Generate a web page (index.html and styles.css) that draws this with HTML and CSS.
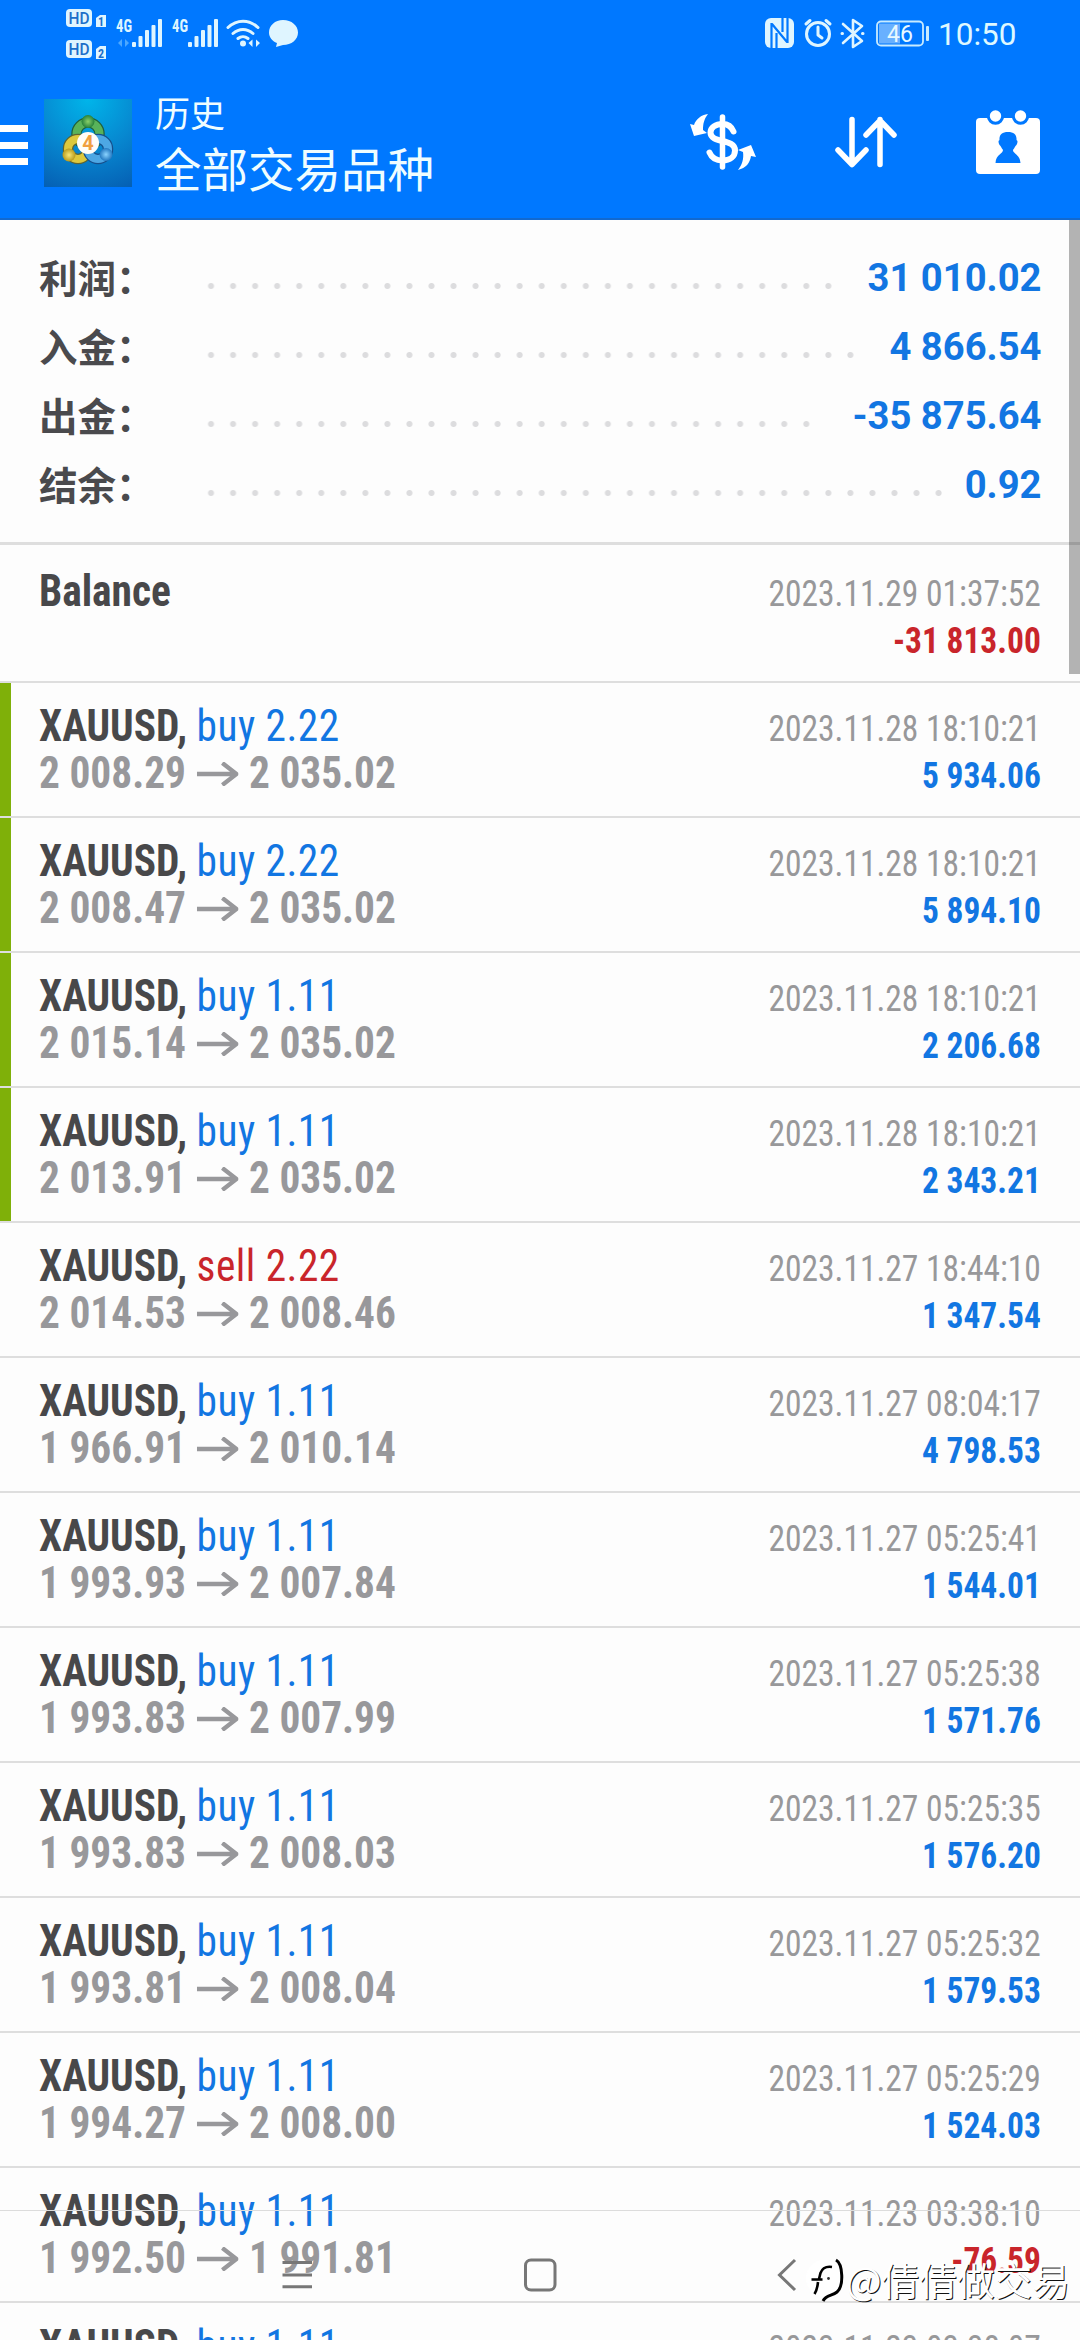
FILE: index.html
```html
<!DOCTYPE html>
<html lang="zh-CN">
<head>
<meta charset="utf-8">
<title>历史</title>
<link rel="stylesheet" href="styles.css">
</head>
<body>
<div class="screen">
  <header class="header">
    <div class="status">
      <svg class="status-left" width="240" height="66" viewBox="60 0 240 66">
        <g fill="#dff5ff">
          <rect x="66" y="9" width="26" height="18" rx="4"/>
          <path d="M96 18l4-3h6v12H96z"/>
          <rect x="66" y="40" width="26" height="18" rx="4"/>
          <path d="M96 49l4-3h6v13H96z"/>
          <rect x="132" y="42" width="4" height="5" rx="1"/>
          <rect x="138.500" y="36" width="4" height="11" rx="1"/>
          <rect x="145" y="30" width="4" height="17" rx="1"/>
          <rect x="151.500" y="25" width="4" height="22" rx="1"/>
          <rect x="158" y="19" width="4" height="28" rx="1"/>
          <rect x="188" y="42" width="4" height="5" rx="1"/>
          <rect x="194.500" y="36" width="4" height="11" rx="1"/>
          <rect x="201" y="30" width="4" height="17" rx="1"/>
          <rect x="207.500" y="25" width="4" height="22" rx="1"/>
          <rect x="214" y="19" width="4" height="28" rx="1"/>
          <circle cx="243" cy="43.500" r="3"/>
          <path d="M248.500 43l4-3.500v7.500zM260 43l-4-3.500v7.500z"/>
          <path d="M283 20c8.500 0 15 5.500 15 12.500S291.500 45 283 45l-7 2 1-4c-5-2-8-6-8-10.500C269 25.500 275 20 283 20z"/>
        </g>
        <g fill="none" stroke="#dff5ff" stroke-width="3" stroke-linecap="round">
          <path d="M228 27.500c9-8.500 21-8.500 30 0M233 33.500c6-5.500 14-5.500 20 0M238 38.500c3-2.500 7-2.500 10 0"/>
        </g>
        <path d="M118 43l4-4v8zM129 43l-4-4v8z" fill="#4da8ff"/>
        <text class="hd" x="79" y="23.800" text-anchor="middle" textLength="21" lengthAdjust="spacingAndGlyphs">HD</text>
        <text class="hd" x="79" y="54.800" text-anchor="middle" textLength="21" lengthAdjust="spacingAndGlyphs">HD</text>
        <text class="sim" x="101" y="26" text-anchor="middle">1</text>
        <text class="sim" x="101" y="57.500" text-anchor="middle">2</text>
        <text class="net" x="116" y="32" textLength="16" lengthAdjust="spacingAndGlyphs">4G</text>
        <text class="net" x="172" y="32" textLength="16" lengthAdjust="spacingAndGlyphs">4G</text>
      </svg>
      <div class="status-right">
        <svg width="170" height="66" viewBox="760 0 170 66">
          <rect x="765" y="18" width="29" height="30" rx="6" fill="#dff5ff"/>
          <path d="M771.500 48V23M772 24l15 18M787.500 18v25M776.500 48V33M782.500 18v14" fill="none" stroke="#0078ff" stroke-width="2.200"/>
          <g fill="none" stroke="#dff5ff" stroke-width="3" stroke-linecap="round" stroke-linejoin="round">
            <circle cx="818" cy="34" r="11.500"/>
            <path d="M818 27v8l4 3M806 24l4-3.500M830 24l-4-3.500"/>
            <path d="M843 24l19 17-9 6V20l9 6-19 17" stroke-width="2.600"/>
            <path d="M842 33.500h.5M862.500 33.500h.5" stroke-width="3"/>
          </g>
          <rect x="879" y="23.500" width="21" height="20" fill="#68b0ff"/>
          <rect x="877" y="21.500" width="46" height="24" rx="4" fill="none" stroke="#c8ebff" stroke-width="1.800"/>
          <rect x="926" y="26" width="3" height="15" rx="1" fill="#c8ebff"/>
          <text class="battery" x="900" y="41.500" text-anchor="middle">46</text>
        </svg>
        <span class="clock">10:50</span>
      </div>
    </div>
    <div class="toolbar">
      <span class="menu"><i></i><i></i><i></i></span>
      <svg class="logo" width="88" height="88" viewBox="0 0 88 88">
        <defs>
          <radialGradient id="bg" cx=".5" cy="0" r="1.100"><stop offset="0" stop-color="#00b5ea"/><stop offset=".55" stop-color="#0786cf"/><stop offset="1" stop-color="#0560b4"/></radialGradient>
          <radialGradient id="gr"><stop offset="0" stop-color="#8ad06a"/><stop offset="1" stop-color="#26813a"/></radialGradient>
          <radialGradient id="ye"><stop offset="0" stop-color="#f8e878"/><stop offset="1" stop-color="#b89a1c"/></radialGradient>
          <radialGradient id="bl"><stop offset="0" stop-color="#8ad3ff"/><stop offset="1" stop-color="#2277c0"/></radialGradient>
        </defs>
        <rect width="88" height="88" fill="url(#bg)"/>
        <g fill="none">
          <circle cx="44" cy="35" r="11.500" stroke="#205f3c" stroke-width="10.500"/>
          <circle cx="44" cy="35" r="11.500" stroke="#59b25a" stroke-width="8"/>
          <circle cx="34" cy="50" r="10" stroke="#5f6430" stroke-width="10.500"/>
          <circle cx="34" cy="50" r="10" stroke="#ddc83c" stroke-width="8"/>
          <circle cx="54" cy="50" r="10" stroke="#164f8c" stroke-width="10.500"/>
          <circle cx="54" cy="50" r="10" stroke="#4da7e4" stroke-width="8"/>
        </g>
        <circle cx="44" cy="22.500" r="6.500" fill="url(#gr)"/>
        <circle cx="25" cy="56" r="6.500" fill="url(#ye)"/>
        <circle cx="62" cy="55.500" r="6.500" fill="url(#bl)"/>
        <circle cx="44" cy="44" r="11" fill="#fffdf8"/>
        <text class="logo-num" x="44" y="51" text-anchor="middle">4</text>
      </svg>
      <div class="titles">
        <div class="title">历史</div>
        <div class="subtitle">全部交易品种</div>
      </div>
      <div class="actions">
        <svg width="68" height="66" viewBox="688 110 68 66">
          <g fill="none" stroke="#fff" stroke-linecap="round">
            <path d="M721.500 118v50" stroke-width="5.500"/>
            <path d="M732.500 132.500c-2-5-6-7.500-11-7.500-7 0-12 3.500-12 8.500 0 11.500 24.500 5.500 24.500 18 0 6-5 10-12.500 10-6.500 0-11-3-13-8" stroke-width="6"/>
          </g>
          <path d="M707 115c-7 1-12 5-14 11l-4-1 4 12 13-3-4-3c0-6 1-11 5-16zM737 171c8-2 12-7 13-14l5 1-5-12-13 5 5 2c1 7-1 13-5 18z" fill="#fff"/>
        </svg>
        <svg width="64" height="66" viewBox="833 110 64 66">
          <path d="M851 120.500v45M837 151l14 14.500 14-14.500M879 165.500v-45M865 136l14-14.500 14 14.500" fill="none" stroke="#fff" stroke-width="5.500" stroke-linecap="round" stroke-linejoin="round"/>
        </svg>
        <svg width="66" height="66" viewBox="974 109 66 66">
          <rect x="975" y="118" width="64" height="56" rx="4" fill="#fff"/>
          <g fill="#fff" stroke="#0078ff" stroke-width="3">
            <circle cx="994.500" cy="116" r="7.200"/><circle cx="1019.500" cy="116" r="7.200"/>
          </g>
          <path d="M1007 132c6 0 9 3 8.500 8l1 1c0 3-1 4-2 5-1 2-2 3-2.500 4 0 4 7 4 7.500 13h-25c.5-9 7.500-9 7.500-13-.5-1-1.500-2-2.500-4-1-1-2-2-2-5l1-1c-.5-5 2.500-8 8.500-8z" fill="#0078ff"/>
        </svg>
      </div>
    </div>
  </header>

  <section class="summary">
    <div class="sum-row"><span class="sum-label">利润：</span><i class="dots d29"></i><b class="sum-value">31 010.02</b></div>
    <div class="sum-row"><span class="sum-label">入金：</span><i class="dots d30"></i><b class="sum-value">4 866.54</b></div>
    <div class="sum-row"><span class="sum-label">出金：</span><i class="dots d28"></i><b class="sum-value">-35 875.64</b></div>
    <div class="sum-row"><span class="sum-label">结余：</span><i class="dots d34"></i><b class="sum-value">0.92</b></div>
  </section>

  <main class="deals">
    <div class="deal balance"><div class="left"><div><b>Balance</b></div></div><div class="right"><div class="date">2023.11.29 01:37:52</div><div class="amount loss">-31 813.00</div></div></div>
    <div class="deal marked"><div class="left"><div><b>XAUUSD,</b> <span class="buy">buy 2.22</span></div><div class="price">2 008.29<svg class="arrow" viewBox="0 0 44 24"><path d="M0 12h41M27 1l15 11-15 11"/></svg>2 035.02</div></div><div class="right"><div class="date">2023.11.28 18:10:21</div><div class="amount">5 934.06</div></div></div>
    <div class="deal marked"><div class="left"><div><b>XAUUSD,</b> <span class="buy">buy 2.22</span></div><div class="price">2 008.47<svg class="arrow" viewBox="0 0 44 24"><path d="M0 12h41M27 1l15 11-15 11"/></svg>2 035.02</div></div><div class="right"><div class="date">2023.11.28 18:10:21</div><div class="amount">5 894.10</div></div></div>
    <div class="deal marked"><div class="left"><div><b>XAUUSD,</b> <span class="buy">buy 1.11</span></div><div class="price">2 015.14<svg class="arrow" viewBox="0 0 44 24"><path d="M0 12h41M27 1l15 11-15 11"/></svg>2 035.02</div></div><div class="right"><div class="date">2023.11.28 18:10:21</div><div class="amount">2 206.68</div></div></div>
    <div class="deal marked"><div class="left"><div><b>XAUUSD,</b> <span class="buy">buy 1.11</span></div><div class="price">2 013.91<svg class="arrow" viewBox="0 0 44 24"><path d="M0 12h41M27 1l15 11-15 11"/></svg>2 035.02</div></div><div class="right"><div class="date">2023.11.28 18:10:21</div><div class="amount">2 343.21</div></div></div>
    <div class="deal"><div class="left"><div><b>XAUUSD,</b> <span class="sell">sell 2.22</span></div><div class="price">2 014.53<svg class="arrow" viewBox="0 0 44 24"><path d="M0 12h41M27 1l15 11-15 11"/></svg>2 008.46</div></div><div class="right"><div class="date">2023.11.27 18:44:10</div><div class="amount">1 347.54</div></div></div>
    <div class="deal"><div class="left"><div><b>XAUUSD,</b> <span class="buy">buy 1.11</span></div><div class="price">1 966.91<svg class="arrow" viewBox="0 0 44 24"><path d="M0 12h41M27 1l15 11-15 11"/></svg>2 010.14</div></div><div class="right"><div class="date">2023.11.27 08:04:17</div><div class="amount">4 798.53</div></div></div>
    <div class="deal"><div class="left"><div><b>XAUUSD,</b> <span class="buy">buy 1.11</span></div><div class="price">1 993.93<svg class="arrow" viewBox="0 0 44 24"><path d="M0 12h41M27 1l15 11-15 11"/></svg>2 007.84</div></div><div class="right"><div class="date">2023.11.27 05:25:41</div><div class="amount">1 544.01</div></div></div>
    <div class="deal"><div class="left"><div><b>XAUUSD,</b> <span class="buy">buy 1.11</span></div><div class="price">1 993.83<svg class="arrow" viewBox="0 0 44 24"><path d="M0 12h41M27 1l15 11-15 11"/></svg>2 007.99</div></div><div class="right"><div class="date">2023.11.27 05:25:38</div><div class="amount">1 571.76</div></div></div>
    <div class="deal"><div class="left"><div><b>XAUUSD,</b> <span class="buy">buy 1.11</span></div><div class="price">1 993.83<svg class="arrow" viewBox="0 0 44 24"><path d="M0 12h41M27 1l15 11-15 11"/></svg>2 008.03</div></div><div class="right"><div class="date">2023.11.27 05:25:35</div><div class="amount">1 576.20</div></div></div>
    <div class="deal"><div class="left"><div><b>XAUUSD,</b> <span class="buy">buy 1.11</span></div><div class="price">1 993.81<svg class="arrow" viewBox="0 0 44 24"><path d="M0 12h41M27 1l15 11-15 11"/></svg>2 008.04</div></div><div class="right"><div class="date">2023.11.27 05:25:32</div><div class="amount">1 579.53</div></div></div>
    <div class="deal"><div class="left"><div><b>XAUUSD,</b> <span class="buy">buy 1.11</span></div><div class="price">1 994.27<svg class="arrow" viewBox="0 0 44 24"><path d="M0 12h41M27 1l15 11-15 11"/></svg>2 008.00</div></div><div class="right"><div class="date">2023.11.27 05:25:29</div><div class="amount">1 524.03</div></div></div>
    <div class="deal"><div class="left"><div><b>XAUUSD,</b> <span class="buy">buy 1.11</span></div><div class="price">1 992.50<svg class="arrow" viewBox="0 0 44 24"><path d="M0 12h41M27 1l15 11-15 11"/></svg>1 991.81</div></div><div class="right"><div class="date">2023.11.23 03:38:10</div><div class="amount loss">-76.59</div></div></div>
    <div class="deal"><div class="left"><div><b>XAUUSD,</b> <span class="buy">buy 1.11</span></div></div><div class="right"><div class="date">2023.11.23 03:38:07</div></div></div>
  </main>

  <div class="scrollbar"></div>
  <nav class="navbar">
    <svg width="1080" height="130" viewBox="0 2210 1080 130">
      <g fill="none" stroke="#777" stroke-width="3">
        <path d="M282.500 2262.500h29.500M282.500 2275h29.500M282.500 2286.700h29.500"/>
        <rect x="525.500" y="2260" width="29.500" height="30" rx="5.500"/>
        <path d="M795 2260l-15.500 15 15.500 15"/>
      </g>
    </svg>
  </nav>
  <div class="watermark">
    <svg width="42" height="48" viewBox="804 2256 42 48">
      <circle cx="824" cy="2279" r="18" fill="#fff"/>
      <path d="M832 2268c-7-1-10 2-11.500 6l-1.500 6M811.500 2280.500h11M818 2283c-.5 5-1.500 9-3.500 12" fill="none" stroke="#000" stroke-width="2.600"/>
      <path d="M836 2261c7 4 8 26 1 32-5 4-11 3-14 9" fill="none" stroke="#000" stroke-width="3"/>
      <circle cx="828.500" cy="2279.500" r="1.400" fill="#333"/>
    </svg>
    <span>@倩倩做交易</span>
  </div>
</div>
</body>
</html>
```
FILE: styles.css
```css
* { box-sizing: border-box; }

body {
  margin: 0;
  font-family: Roboto, "Noto Sans CJK SC", sans-serif;
}

.screen {
  position: relative;
  width: 1080px;
  height: 2340px;
  overflow: hidden;
  background: #fdfdfd;
}

/* Header */
.header {
  height: 220px;
  background: #0078ff;
  border-bottom: 2px solid #1269cf;
}

.status {
  display: flex;
  justify-content: space-between;
  height: 66px;
  padding: 0 66px 0 60px;
}

.status-right { display: flex; }
.status svg { display: block; }

.hd { font: 500 17px Roboto, sans-serif; fill: #1c6fc9; }
.sim { font: 700 12px "Roboto Condensed", sans-serif; fill: #1c6fc9; }
.net { font: 700 18px "Roboto Condensed", sans-serif; fill: #dff5ff; }
.battery { font: 400 23px Roboto, sans-serif; fill: #e8f8ff; }

.clock {
  width: 84px;
  padding-left: 8px;
  font-size: 31.500px;
  line-height: 69px;
  color: #dff8ff;
}

.toolbar {
  display: flex;
  align-items: flex-start;
  height: 152px;
  padding-top: 24px;
}

.menu {
  display: flex;
  flex-direction: column;
  gap: 9.500px;
  width: 28px;
  padding-top: 35px;
}
.menu i { height: 7px; background: #fff; }

.logo { margin: 9px 23px 0 16px; }
.logo-num { font: 700 20px Roboto, sans-serif; fill: #f0a040; }

.titles { color: #effdff; font-family: "Noto Sans CJK SC", sans-serif; }
.title { height: 45px; font-size: 35px; line-height: 43px; }
.subtitle { font-size: 46.500px; line-height: 64px; }

.actions {
  display: flex;
  gap: 77px;
  margin-left: auto;
  padding: 19px 39px 0 0;
}

/* Totals */
.summary {
  height: 325px;
  padding: 24px 38.500px 0 39px;
  border-bottom: 3px solid #dedede;
}

.sum-row {
  display: flex;
  height: 69px;
  font-size: 38.200px;
  line-height: 69px;
}
.sum-label { width: 161px; font-size: 38.500px; font-family: "Noto Sans CJK SC", sans-serif; font-weight: 700; line-height: 65px; color: #4a4a4d; }
.sum-value { margin-left: auto; color: #1276e2; }

.dots {
  height: 22px;
  margin-top: 31px;
  background: radial-gradient(circle, #dcdcde 2.500px, transparent 3.500px) 0 0 / 22.050px 22px repeat-x;
}
.d28 { width: 617.400px; }
.d29 { width: 639.450px; }
.d30 { width: 661.500px; }
.d34 { width: 749.700px; }

/* Deals */
.deal {
  display: flex;
  justify-content: space-between;
  height: 135px;
  padding: 20px 39px 0;
  border-bottom: 2px solid #dedede;
  font-family: "Roboto Condensed", sans-serif;
  font-size: 44px;
  line-height: 47px;
  white-space: nowrap;
}
.balance { height: 138px; padding-top: 23px; }
.marked { background: linear-gradient(#7fb009, #7fb009) no-repeat 0 0 / 11px 100%; }

.left { color: #48484a; transform: scaleX(.94); transform-origin: 0 0; }
.right { padding-top: 3px; font-size: 36px; text-align: right; transform: scaleX(.93); transform-origin: 100% 0; }

.price { color: #98989b; font-weight: 700; }
.arrow {
  width: 44px;
  height: 24px;
  margin: 0 11px 2px 12px;
  fill: none;
  stroke: #98989b;
  stroke-width: 4.500px;
}
.buy, .sell { letter-spacing: .5px; }
.buy { color: #1276e2; }
.sell { color: #c9252b; }
.date { color: #98989a; }
.amount { color: #1276e2; font-weight: 700; }
.amount.loss { color: #c9252b; }

/* Overlays */
.scrollbar {
  position: absolute;
  top: 220px;
  right: 0;
  width: 11px;
  height: 454px;
  background: rgba(0, 0, 0, .29);
}

.navbar {
  position: absolute;
  left: 0;
  bottom: 0;
  height: 130px;
  border-top: 1px solid #dcdcdc;
}
.navbar svg { display: block; margin-top: -1px; }

.watermark {
  position: absolute;
  right: 10px;
  bottom: 37px;
  display: flex;
  align-items: center;
  height: 48px;
  font: 37.700px/42px "Noto Sans CJK SC", sans-serif;
  color: #fff;
  text-shadow: 1px 1px 0 #111;
}
```
